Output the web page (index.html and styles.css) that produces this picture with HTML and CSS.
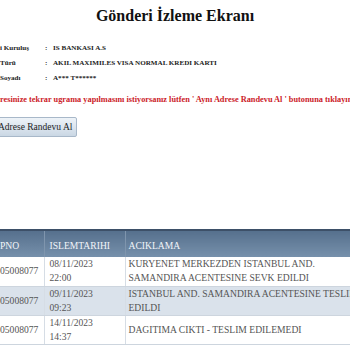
FILE: index.html
```html
<!DOCTYPE html>
<html lang="tr">
<head>
<meta charset="utf-8">
<title>Gönderi İzleme Ekranı</title>
<link rel="stylesheet" href="styles.css">
</head>
<body>
<div class="page">
  <h1 class="title">Gönderi İzleme Ekranı</h1>

  <div class="info">
    <div class="label">i Kuruluş</div><div class="colon">:</div><div class="value">IS BANKASI A.S</div>
    <div class="label">Türü</div><div class="colon">:</div><div class="value">AKIL MAXIMILES VISA NORMAL KREDI KARTI</div>
    <div class="label">Soyadı</div><div class="colon">:</div><div class="value">A*** T******</div>
  </div>

  <p class="notice">resinize tekrar ugrama yapılmasını istiyorsanız lütfen ' Aynı Adrese Randevu Al ' butonuna tıklayınız.</p>

  <div class="actions">
    <button class="btn" type="button">Aynı Adrese Randevu Al</button>
  </div>

  <table class="grid">
    <colgroup>
      <col class="c1"><col class="c2"><col class="c3">
    </colgroup>
    <thead>
      <tr><th>PNO</th><th>ISLEMTARIHI</th><th>ACIKLAMA</th></tr>
    </thead>
    <tbody>
      <tr><td>05008077</td><td>08/11/2023 22:00</td><td>KURYENET MERKEZDEN ISTANBUL AND. SAMANDIRA ACENTESINE SEVK EDILDI</td></tr>
      <tr class="alt"><td>05008077</td><td>09/11/2023 09:23</td><td>ISTANBUL AND. SAMANDIRA ACENTESINE TESLIM EDILDI</td></tr>
      <tr><td>05008077</td><td>14/11/2023 14:37</td><td>DAGITIMA CIKTI - TESLIM EDILEMEDI</td></tr>
    </tbody>
  </table>
</div>
</body>
</html>
```

FILE: styles.css
```css
html, body {
  margin: 0;
  padding: 0;
  background: #ffffff;
}
body {
  font-family: "Liberation Serif", "Times New Roman", serif;
  color: #333;
  overflow: hidden;
}
.page {
  width: 350px;
  overflow: hidden;
}
.title {
  margin: 7px 0 0;
  font-size: 16px;
  line-height: 18px;
  font-weight: bold;
  text-align: center;
  color: #111;
}
.info {
  display: grid;
  grid-template-columns: 45px 8px 1fr;
  grid-auto-rows: 15px;
  align-items: center;
  margin-top: 15px;
  font-size: 7.1px;
  font-weight: bold;
  color: #222;
}
.colon { text-align: left; }
.notice {
  margin: 8px 0 0;
  font-size: 8.3px;
  line-height: 14px;
  font-weight: bold;
  color: #cc2229;
  white-space: nowrap;
}
.actions {
  margin-top: 9px;
  height: 20px;
}
.btn {
  margin-left: -27px;
  height: 20px;
  padding: 0 4px;
  font-family: "Liberation Serif", "Times New Roman", serif;
  font-size: 9.5px;
  color: #222;
  background: linear-gradient(#eef3f8, #cad7e4);
  border: 1px solid #a8b8c9;
  border-radius: 2px;
}
.grid {
  margin-top: 93px;
  border-collapse: collapse;
  table-layout: fixed;
  width: 373px;
  font-size: 9.6px;
}
.c1 { width: 44px; }
.c2 { width: 81px; }
.c3 { width: 248px; }
.grid th {
  text-align: left;
  font-weight: normal;
  color: #f2f5f9;
  background: linear-gradient(#56708d, #7690ab);
  border-top: 2px solid #3d5068;
  border-left: 1px solid #7f95ad;
  height: 27px;
  padding: 2px 3px 0 5px;
  box-sizing: border-box;
}
.grid th:first-child { padding-left: 0; border-left: none; }
.grid th:last-child { padding-left: 3px; }
.grid td {
  color: #555;
  line-height: 14px;
  padding: 0 12px 0 5px;
  height: 29px;
  box-sizing: border-box;
  border-bottom: 1px solid #cdd5de;
  border-left: 1px solid #d6dde5;
  vertical-align: middle;
}
.grid td:first-child { padding-left: 0; padding-right: 3px; border-left: none; }
.grid td:last-child { padding-left: 3px; padding-right: 3px; }
.grid tr.alt td { background: #dae2eb; }
```
